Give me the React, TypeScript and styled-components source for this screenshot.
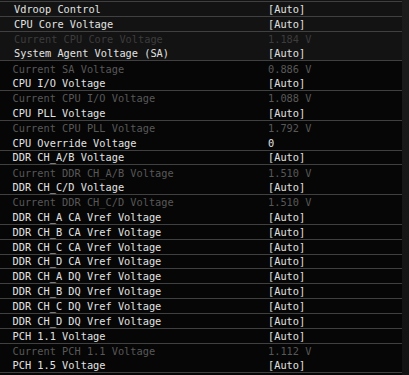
import React from 'react';
import styled, { createGlobalStyle } from 'styled-components';

const GlobalStyle = createGlobalStyle`
  html, body {
    margin: 0;
    padding: 0;
    background: #060606;
  }
`;

const Screen = styled.div`
  display: flex;
  width: 409px;
  height: 375px;
  overflow: hidden;
  background: #060606;
  font-family: 'DejaVu Sans Mono', 'Liberation Mono', monospace;
  font-size: 10.3px;
`;

const Main = styled.div`
  width: 402px;
  display: flex;
  flex-direction: column;
`;

const ScrollTrack = styled.div`
  width: 7px;
  background: linear-gradient(#1c1c1c, #121212);
`;

const TopGroup = styled.div`
  background: #131313;
  padding-top: 1px;
`;

const Rule = styled.div`
  height: 1px;
  background: #404040;
`;

const Row = styled.div<{ $dim?: boolean; $indent: number; $dimColor?: string }>`
  box-sizing: border-box;
  height: 14.87px;
  display: grid;
  grid-template-columns: ${(p) => 268 - p.$indent}px 1fr;
  align-items: center;
  padding-left: ${(p) => p.$indent}px;
  border-bottom: ${(p) => (p.$dim ? 'none' : '1px solid #404040')};
  color: ${(p) => (p.$dim ? p.$dimColor || '#585858' : '#e2e2e2')};
  white-space: pre;
  line-height: 1;
`;

const Label = styled.span``;
const Value = styled.span``;

type Item = { label: string; value: string; dim?: boolean };

const top: Item[] = [
  { label: 'Vdroop Control', value: '[Auto]' },
  { label: 'CPU Core Voltage', value: '[Auto]' },
  { label: 'Current CPU Core Voltage', value: '1.184 V', dim: true },
  { label: 'System Agent Voltage (SA)', value: '[Auto]' },
];

const rest: Item[] = [
  { label: 'Current SA Voltage', value: '0.886 V', dim: true },
  { label: 'CPU I/O Voltage', value: '[Auto]' },
  { label: 'Current CPU I/O Voltage', value: '1.088 V', dim: true },
  { label: 'CPU PLL Voltage', value: '[Auto]' },
  { label: 'Current CPU PLL Voltage', value: '1.792 V', dim: true },
  { label: 'CPU Override Voltage', value: '0' },
  { label: 'DDR CH_A/B Voltage', value: '[Auto]' },
  { label: 'Current DDR CH_A/B Voltage', value: '1.510 V', dim: true },
  { label: 'DDR CH_C/D Voltage', value: '[Auto]' },
  { label: 'Current DDR CH_C/D Voltage', value: '1.510 V', dim: true },
  { label: 'DDR CH_A CA Vref Voltage', value: '[Auto]' },
  { label: 'DDR CH_B CA Vref Voltage', value: '[Auto]' },
  { label: 'DDR CH_C CA Vref Voltage', value: '[Auto]' },
  { label: 'DDR CH_D CA Vref Voltage', value: '[Auto]' },
  { label: 'DDR CH_A DQ Vref Voltage', value: '[Auto]' },
  { label: 'DDR CH_B DQ Vref Voltage', value: '[Auto]' },
  { label: 'DDR CH_C DQ Vref Voltage', value: '[Auto]' },
  { label: 'DDR CH_D DQ Vref Voltage', value: '[Auto]' },
  { label: 'PCH 1.1 Voltage', value: '[Auto]' },
  { label: 'Current PCH 1.1 Voltage', value: '1.112 V', dim: true },
  { label: 'PCH 1.5 Voltage', value: '[Auto]' },
];

const App = () => {
  return (
    <>
      <GlobalStyle />
      <Screen>
        <Main>
          <TopGroup>
            <Rule />
            {top.map((it) => (
              <Row key={it.label} $dim={it.dim} $indent={14} $dimColor="#3c3c3c">
                <Label>{it.label}</Label>
                <Value>{it.value}</Value>
              </Row>
            ))}
          </TopGroup>
          {rest.map((it) => (
            <Row key={it.label} $dim={it.dim} $indent={12.5}>
              <Label>{it.label}</Label>
              <Value>{it.value}</Value>
            </Row>
          ))}
        </Main>
        <ScrollTrack />
      </Screen>
    </>
  );
};

export default App;
